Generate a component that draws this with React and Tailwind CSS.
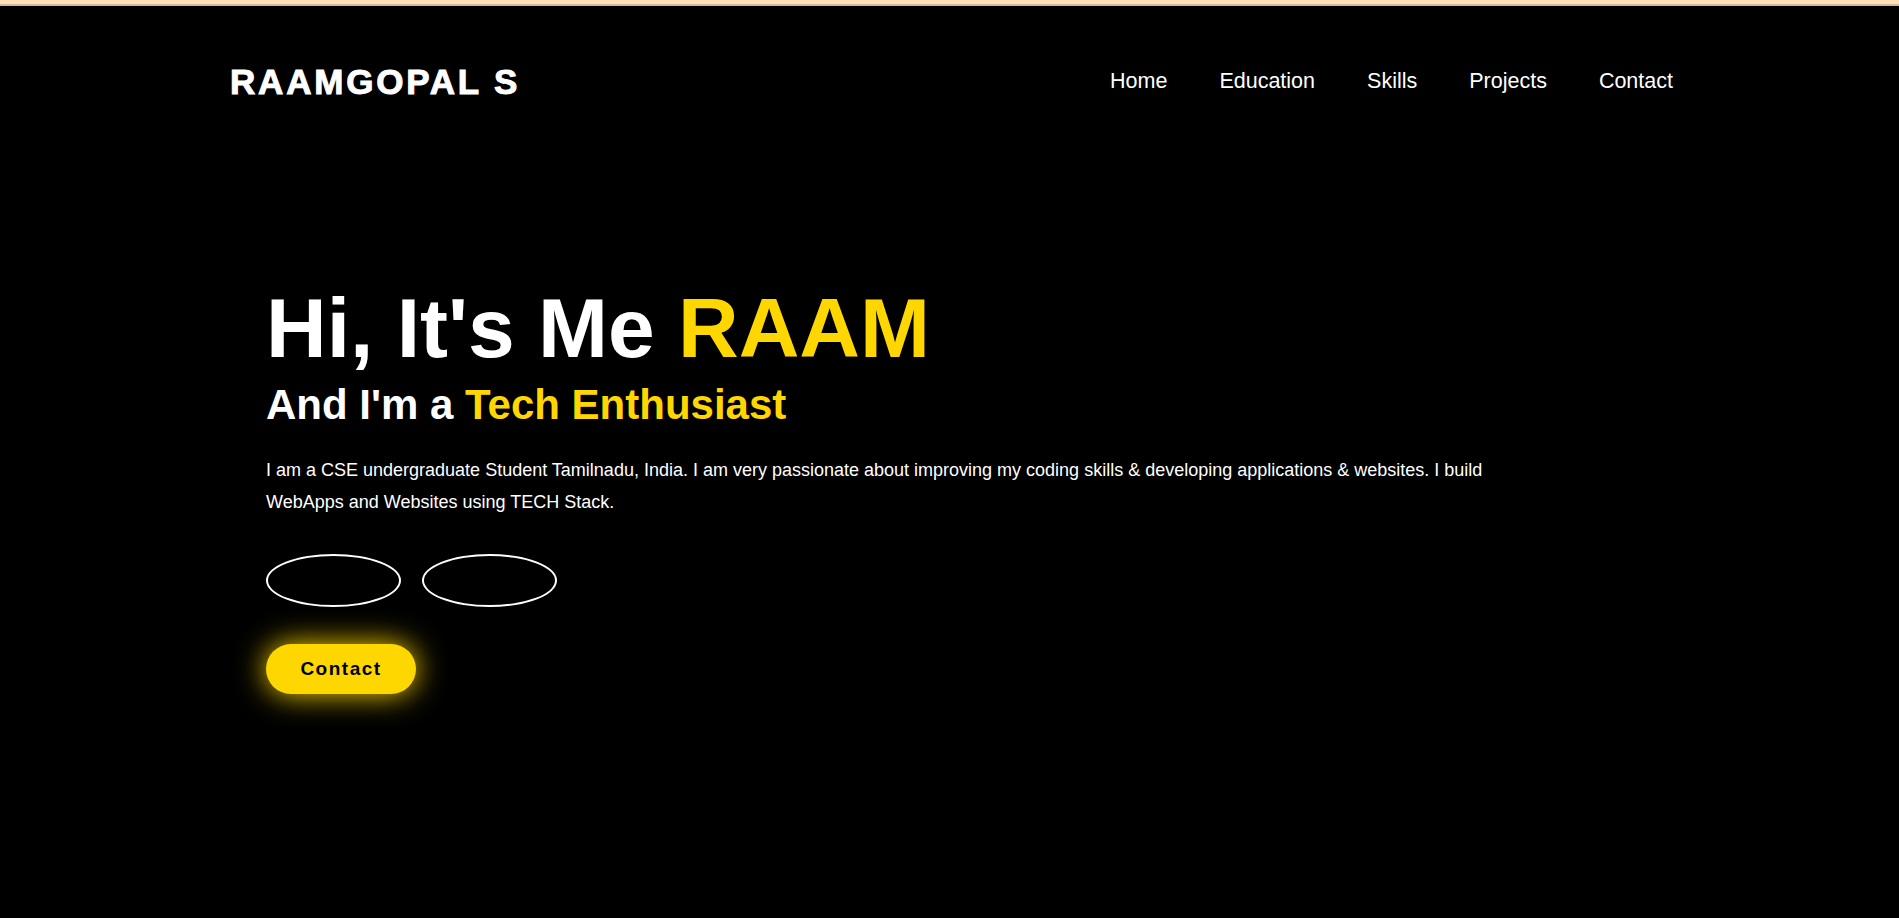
import React from 'react';

const navLinks = ['Home', 'Education', 'Skills', 'Projects', 'Contact'];

const App = () => {
  return (
    <div className="min-h-screen bg-black text-white font-['Liberation_Sans',Arial,sans-serif]">
      {/* thin strip at the very top */}
      <div className="h-[4px] bg-[#ffdfb8] border-b-2 border-[#d9b994] box-content" />

      <header className="h-[150px] flex items-center justify-between pl-[230px] pr-[226px]">
        <a href="#" className="text-[35px] font-bold tracking-[2.8px] leading-none [-webkit-text-stroke:1px_white]">
          RAAMGOPAL S
        </a>
        <nav className="mt-[2px] flex gap-[52px]">
          {navLinks.map((link) => (
            <a key={link} href="#" className="text-[21.5px] leading-none">
              {link}
            </a>
          ))}
        </nav>
      </header>

      <section className="pl-[266px] pt-[130px]">
        <div className="max-w-[1250px]">
          <h1 className="text-[84px] font-bold leading-none">
            Hi, It's Me <span className="text-[#ffd700]">RAAM</span>
          </h1>
          <h3 className="mt-[14px] text-[42px] font-bold leading-none">
            And I'm a <span className="text-[#ffd700]">Tech Enthusiast</span>
          </h3>
          <p className="mt-[28px] text-[18px] leading-[32px]">
            I am a CSE undergraduate Student Tamilnadu, India. I am very passionate about improving my coding skills &amp; developing applications &amp; websites. I build WebApps and Websites using TECH Stack.
          </p>

          <div className="mt-[36px] flex gap-[21px]">
            <a href="#" className="w-[135px] h-[53px] rounded-[50%] border-2 border-white" />
            <a href="#" className="w-[135px] h-[53px] rounded-[50%] border-2 border-white" />
          </div>

          <a
            href="#"
            className="mt-[37px] inline-flex items-center justify-center w-[150px] h-[50px] rounded-full bg-[#ffd700] text-black text-[19px] font-bold tracking-[1.5px] shadow-[0_0_30px_#ffd700]"
          >
            Contact
          </a>
        </div>
      </section>
    </div>
  );
};

export default App;
